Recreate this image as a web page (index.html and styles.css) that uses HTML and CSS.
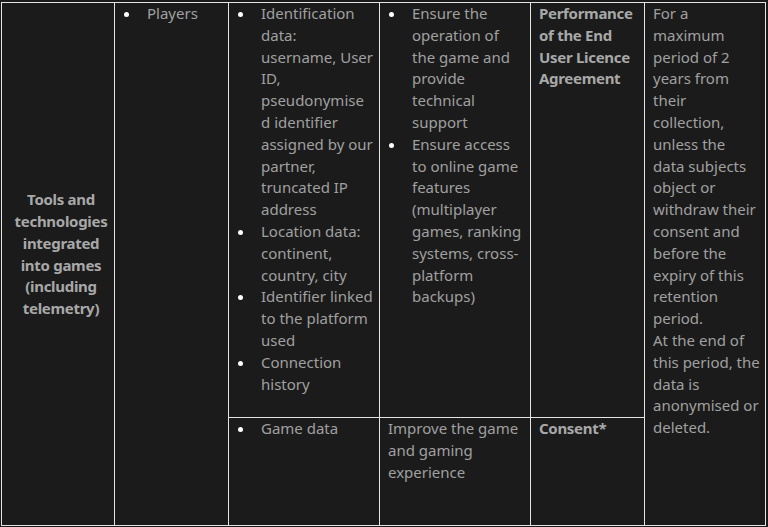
FILE: index.html
```html
<!DOCTYPE html>
<html lang="en">
<head>
<meta charset="utf-8">
<title>Data processing table</title>
<link rel="stylesheet" href="styles.css">
</head>
<body>
<table class="data-table">
  <colgroup>
    <col class="c1"><col class="c2"><col class="c3"><col class="c4"><col class="c5"><col class="c6">
  </colgroup>
  <tr class="row-a">
    <td rowspan="2" class="purpose"><strong>Tools and technologies integrated into games (including telemetry)</strong></td>
    <td rowspan="2"><ul class="list"><li>Players</li></ul></td>
    <td class="data"><ul class="list">
      <li>Identification data: username, User ID, pseudonymised identifier assigned by our partner, truncated IP address</li>
      <li>Location data: continent, country, city</li>
      <li>Identifier linked to the platform used</li>
      <li>Connection history</li>
    </ul></td>
    <td><ul class="list">
      <li>Ensure the operation of the game and provide technical support</li>
      <li>Ensure access to online game features (multiplayer games, ranking systems, cross-platform backups)</li>
    </ul></td>
    <td><strong>Performance of the End User Licence Agreement</strong></td>
    <td rowspan="2" class="retention">For a maximum period of 2 years from their collection, unless the data subjects object or withdraw their consent and before the expiry of this retention period.<br>At the end of this period, the data is anonymised or deleted.</td>
  </tr>
  <tr class="row-b">
    <td class="data"><ul class="list"><li>Game data</li></ul></td>
    <td>Improve the game and gaming experience</td>
    <td><strong>Consent*</strong></td>
  </tr>
</table>
</body>
</html>
```
FILE: styles.css
```css
html, body {
  margin: 0;
  padding: 0;
  background: #1b1b1b;
}
body {
  font-family: "Noto Sans", "Open Sans", sans-serif;
  font-size: 15px;
  line-height: 21.8px;
  color: #a0a0a0;
}
.data-table {
  margin: 2px 0 0 1px;
  width: 764px;
  table-layout: fixed;
  border-collapse: collapse;
}
.c1 { width: 113px; }
.c2 { width: 114px; }
.c3 { width: 151px; }
.c4 { width: 151px; }
.c5 { width: 114px; }
.c6 { width: 121px; }
.data-table td {
  border: 1px solid #e4e4e4;
  vertical-align: top;
  padding: 0 5px 0 8px;
  overflow-wrap: anywhere;
}
.data-table td.data { padding-right: 6px; }
.data-table td.retention { padding-right: 5px; }
.row-a { height: 415px; }
.row-b { height: 108px; }
.data-table td.purpose {
  vertical-align: middle;
  text-align: center;
  padding: 0 4px 19px 10px;
  overflow-wrap: normal;
}
strong { font-weight: 700; color: #a8a8a8; letter-spacing: -0.3px; }
.list {
  list-style: none;
  margin: 0;
  padding: 0;
}
.list li {
  display: grid;
  grid-template-columns: 24px 1fr;
}
.list li::before {
  content: "";
  width: 5px;
  height: 5px;
  border-radius: 50%;
  background: #ffffff;
  margin: 9px 0 0 1px;
}
```
